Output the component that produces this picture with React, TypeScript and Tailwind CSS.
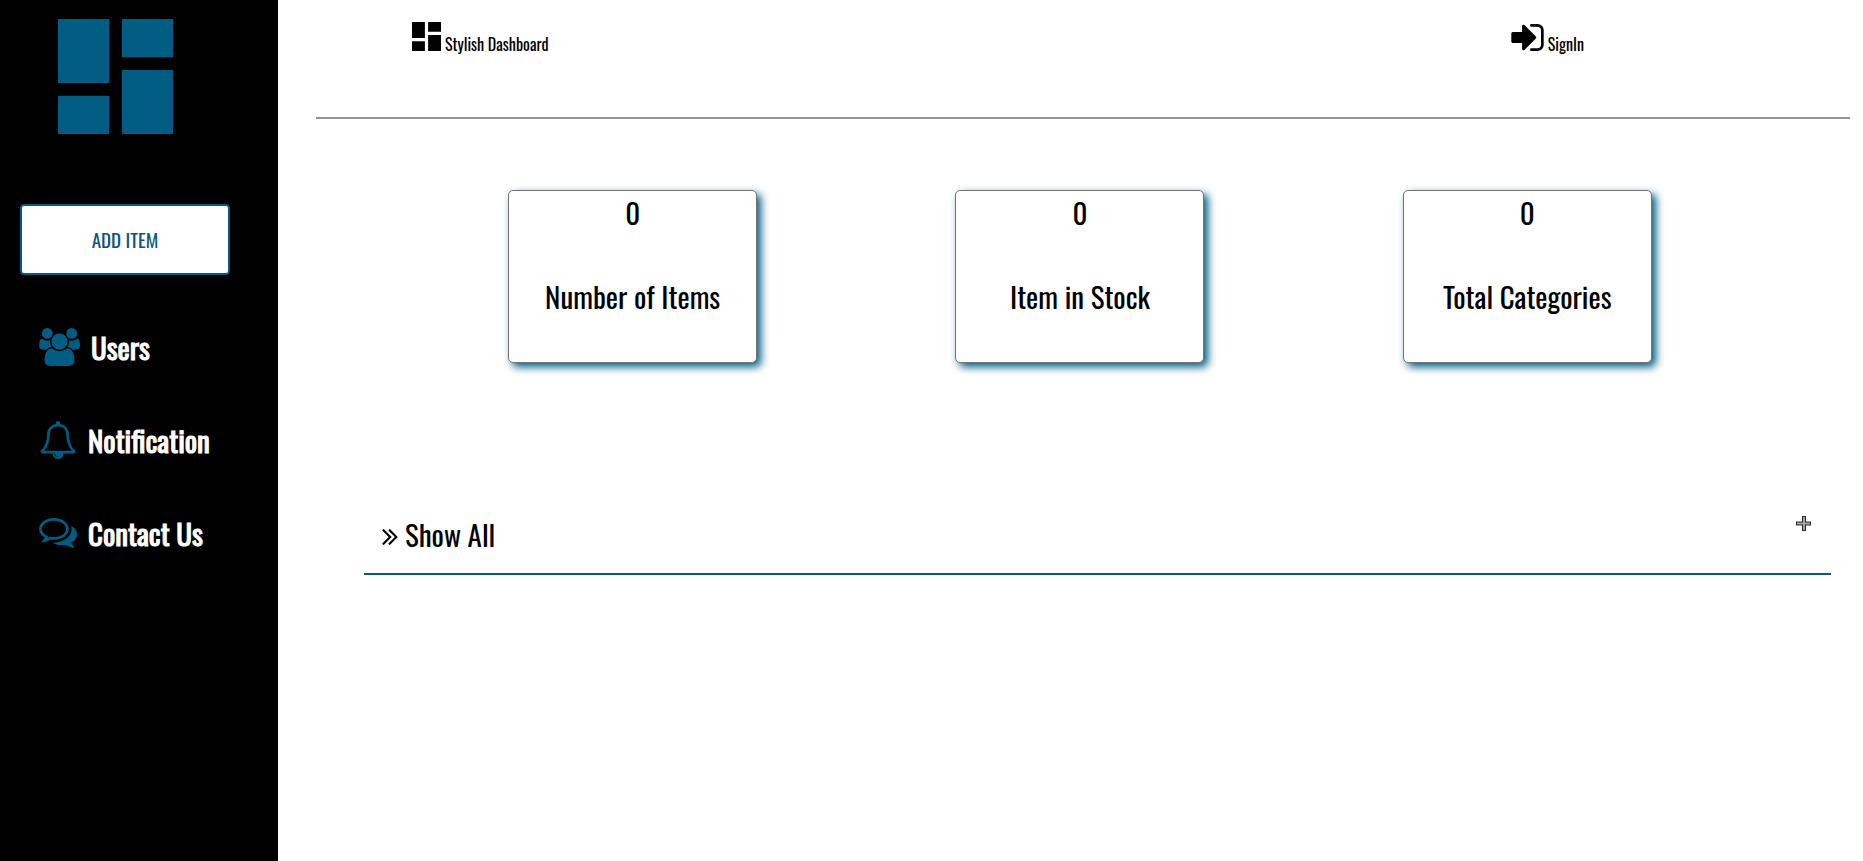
import type { ReactNode } from "react";

type IconProps = { className?: string };

function Glyph({ viewBox, d, className }: { viewBox: string; d: string; className?: string }) {
  return (
    <svg viewBox={viewBox} fill="currentColor" aria-hidden="true" className={className}>
      <path d={d} />
    </svg>
  );
}

const DashboardIcon = ({ className }: IconProps) => (
  <Glyph className={className} viewBox="3 3 18 18" d="M3 13h8V3H3v10zm0 8h8v-6H3v6zm10 0h8V11h-8v10zm0-18v6h8V3h-8z" />
);

const UsersIcon = ({ className }: IconProps) => (
  <Glyph
    className={className}
    viewBox="64 0 1920 1792"
    d="M657 896q-162 5-265 128h-134q-82 0-138-40.5t-56-118.5q0-353 124-353 6 0 43.5 21t97.5 42.5 119 21.5q67 0 133-23-5 37-5 66 0 159 90 256zm1071 637q0 120-73 189.5t-194 69.5h-874q-121 0-194-69.5t-73-189.5q0-53 3.5-103.5t14-109 26.5-108.5 43-97.5 62-81 85.5-53.5 111.5-20q10 0 43 21.5t73 48 107 48 135 21.5 135-21.5 107-48 73-48 43-21.5q61 0 111.5 20t85.5 53.5 62 81 43 97.5 26.5 108.5 14 109 3.5 103.5zm-1024-1277q0 106-75 181t-181 75-181-75-75-181 75-181 181-75 181 75 75 181zm704 384q0 159-112.5 271.5t-271.5 112.5-271.5-112.5-112.5-271.5 112.5-271.5 271.5-112.5 271.5 112.5 112.5 271.5zm576 225q0 78-56 118.5t-138 40.5h-134q-103-123-265-128 90-97 90-256 0-29-5-66 66 23 133 23 59 0 119-21.5t97.5-42.5 43.5-21q124 0 124 353zm-128-609q0 106-75 181t-181 75-181-75-75-181 75-181 181-75 181 75 75 181z"
  />
);

const BellIcon = ({ className }: IconProps) => (
  <Glyph
    className={className}
    viewBox="64 0 1664 1792"
    d="M912 1696q0-16-16-16-59 0-101.5-42.5t-42.5-101.5q0-16-16-16t-16 16q0 73 51.5 124.5t124.5 51.5q16 0 16-16zm-666-288h1300q-266-300-266-832 0-51-24-105t-69-103-121.5-80.5-169.5-31.5-169.5 31.5-121.5 80.5-69 103-24 105q0 532-266 832zm1482 0q0 52-38 90t-90 38h-448q0 106-75 181t-181 75-181-75-75-181h-448q-52 0-90-38t-38-90q50-42 91-88t85-119.5 74.5-158.5 50-206 19.5-260q0-152 117-282.5t307-158.5q-8-19-8-39 0-40 28-68t68-28 68 28 28 68q0 20-8 39 190 28 307 158.5t117 282.5q0 139 19.5 260t50 206 74.5 158.5 85 119.5 91 88z"
  />
);

const CommentsIcon = ({ className }: IconProps) => (
  <Glyph
    className={className}
    viewBox="0 256 1792 1408"
    d="M704 384q-153 0-286 52t-211.5 141-78.5 191q0 82 53 158t149 132l97 56-35 84q34-20 62-39l44-31 53 10q78 14 153 14 153 0 286-52t211.5-141 78.5-191-78.5-191-211.5-141-286-52zm0-128q191 0 353.5 68.5t256.5 186.5 94 257-94 257-256.5 186.5-353.5 68.5q-86 0-176-16-124 88-278 128-36 9-86 16h-3q-11 0-20.5-8t-11.5-21q-1-3-1-6.5t.5-6.5 2-6l2.5-5 3.5-5.5 4-5 4.5-5 4-4.5q5-6 23-25t26-29.5 22.5-29 25-38.5 20.5-44q-124-72-195-177t-71-224q0-139 94-257t256.5-186.5 353.5-68.5zm822 1169q10 24 20.5 44t25 38.5 22.5 29 26 29.5 23 25q1 1 4 4.5t4.5 5 4 5 3.5 5.5l2.5 5 2 6 .5 6.5-1 6.5q-3 14-13 22t-22 7q-50-7-86-16-154-40-278-128-90 16-176 16-271 0-472-132 58 4 88 4 161 0 309-45t264-129q125-92 192-212t67-254q0-77-23-152 129 71 204 178t75 230q0 120-71 224.5t-195 176.5z"
  />
);

const SignInIcon = ({ className }: IconProps) => (
  <Glyph
    className={className}
    viewBox="128 256 1536 1280"
    d="M1312 896q0 26-19 45l-544 544q-19 19-45 19t-45-19-19-45v-288h-448q-26 0-45-19t-19-45v-384q0-26 19-45t45-19h448v-288q0-26 19-45t45-19 45 19l544 544q19 19 19 45zm352-352v704q0 119-84.5 203.5t-203.5 84.5h-320q-13 0-22.5-9.5t-9.5-22.5q0-4-1-20t-.5-26.5 3-23.5 10-19.5 20.5-6.5h320q66 0 113-47t47-113v-704q0-66-47-113t-113-47h-312l-11.5-1-11.5-3-8-5.5-7-9-2-13.5q0-4-1-20t-.5-26.5 3-23.5 10-19.5 20.5-6.5h320q119 0 203.5 84.5t84.5 203.5z"
  />
);

const DoubleAngleIcon = ({ className }: IconProps) => (
  <Glyph
    className={className}
    viewBox="397 461 966 998"
    d="M979 960q0 13-10 23l-466 466q-10 10-23 10t-23-10l-50-50q-10-10-10-23t10-23l393-393-393-393q-10-10-10-23t10-23l50-50q10-10 23-10t23 10l466 466q10 10 10 23zm384 0q0 13-10 23l-466 466q-10 10-23 10t-23-10l-50-50q-10-10-10-23t10-23l393-393-393-393q-10-10-10-23t10-23l50-50q10-10 23-10t23 10l466 466q10 10 10 23z"
  />
);

function NavItem({ icon, label }: { icon: ReactNode; label: string }) {
  return (
    <li>
      <a href="#" className="flex h-[93px] items-center gap-[11px] text-[29px] leading-9 text-white [-webkit-text-stroke:1px_white]">
        {icon}
        <span className="pt-px">{label}</span>
      </a>
    </li>
  );
}

function StatCard({ value, label }: { value: number; label: string }) {
  return (
    <article className="flex h-[173px] w-[249px] flex-col items-center gap-12 rounded-[5px] border border-[#737373] bg-white pt-[3px] text-[29px] leading-9 shadow-[4px_4px_8px_#005c83]">
      <p>{value}</p>
      <h2>{label}</h2>
    </article>
  );
}

export default function App() {
  return (
    <div className="flex min-h-screen bg-white font-['Oswald','Liberation_Sans_Narrow','Liberation_Sans',sans-serif] text-black">
      <aside className="w-[278px] shrink-0 bg-black pt-[19px]">
        <DashboardIcon className="ml-[58px] size-[115px] text-[#005c83]" />
        <button
          type="button"
          className="mt-[70px] ml-5 h-[71px] w-[210px] rounded-[4px] border-2 border-[#005c83] bg-white text-[19px] text-[#0b557a]"
        >
          ADD ITEM
        </button>
        <nav className="mt-[25px] pl-[39px]">
          <ul>
            <NavItem icon={<UsersIcon className="h-[38px] w-[41px] text-[#005c83]" />} label="Users" />
            <NavItem icon={<BellIcon className="h-[38px] w-[38px] text-[#005c83]" />} label="Notification" />
            <NavItem icon={<CommentsIcon className="h-[30px] w-[38px] text-[#005c83]" />} label="Contact Us" />
          </ul>
        </nav>
      </aside>

      <main className="min-w-0 flex-1 pr-[13px] pl-[38px]">
        <header className="flex h-[119px] items-start justify-between border-b-2 border-[#949494] pt-[22px] pr-[266px] pl-24">
          <a href="#" className="flex items-end gap-1 text-[16px]">
            <DashboardIcon className="size-[29px]" />
            <span className="-mb-1 leading-[22px]">Stylish Dashboard</span>
          </a>
          <a href="#" className="flex items-end gap-1 pt-0.5 text-[16px]">
            <SignInIcon className="h-[27px] w-[33px]" />
            <span className="-mb-1 leading-[22px]">SignIn</span>
          </a>
        </header>

        <section className="grid grid-cols-3 justify-items-center pt-[71px] pr-[99px] pl-[93px]">
          <StatCard value={0} label="Number of Items" />
          <StatCard value={0} label="Item in Stock" />
          <StatCard value={0} label="Total Categories" />
        </section>

        <section className="mt-36 mr-[19px] ml-12 flex h-[68px] items-start justify-between border-b-2 border-[#0b5a7d] pr-5 pl-[18px]">
          <button type="button" className="mt-[9px] flex items-center gap-[7px] text-[29px] leading-9">
            <DoubleAngleIcon className="mt-1.5 h-4 w-4" />
            Show All
          </button>
          <svg viewBox="0 0 15 15" className="mt-[9px] size-[15px]" aria-hidden="true">
            <path d="M6 0h4v5.5h5v4h-5V15H6V9.500H0v-4h6z" fill="#2a2a2a" />
            <path d="M7 1h2v5.500h5v2H9V14H7V8.500H1v-2h6z" fill="#a3a3a3" />
          </svg>
        </section>
      </main>
    </div>
  );
}
